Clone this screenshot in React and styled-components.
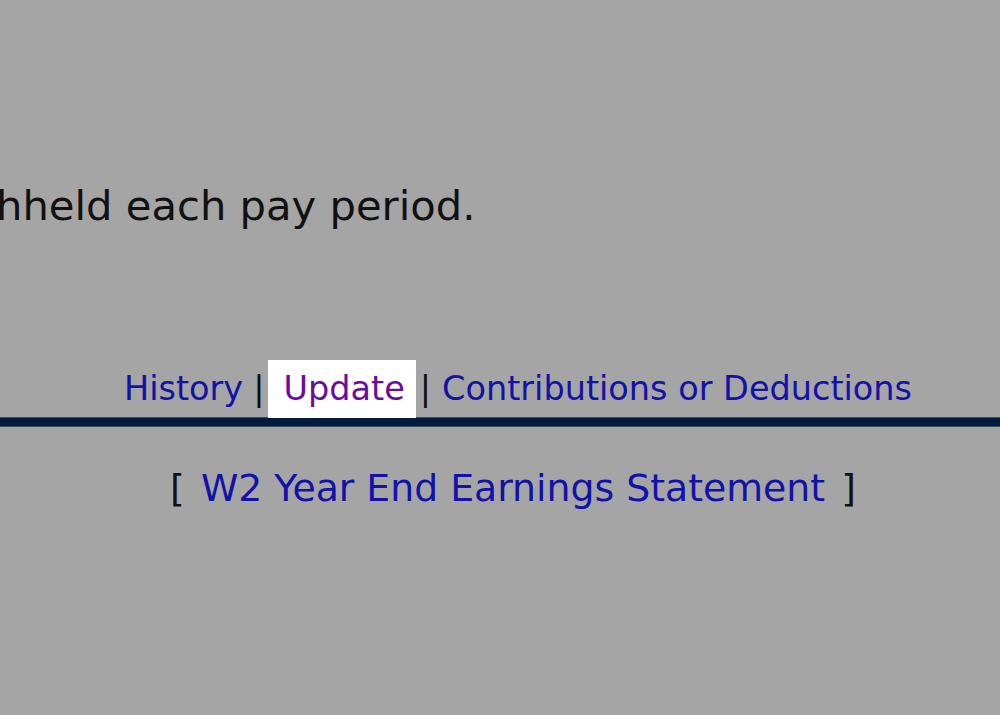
import React from "react"
import styled, { createGlobalStyle } from "styled-components"

const Global = createGlobalStyle`
  html, body {
    margin: 0;
    padding: 0;
    background: #a5a5a5;
  }
  body {
    font-family: "DejaVu Sans", Verdana, sans-serif;
    color: #111;
    overflow: hidden;
  }
`

const Page = styled.div`
  width: 1000px;
  height: 715px;
  overflow: hidden;
  padding-top: 185px;
  box-sizing: border-box;
`

const Para = styled.p`
  margin: 0 0 0 -4px;
  font-size: 41.7px;
  line-height: 42px;
  white-space: nowrap;
`

const Nav = styled.div`
  width: 1036px;
  margin-top: 133px;
  text-align: center;
  font-size: 33.5px;
  line-height: 58px;
  white-space: nowrap;
`

const NavLink = styled.a`
  color: #1212a8;
  text-decoration: none;
`

const Sep = styled.span`
  color: #111;
  margin: ${p => p.$m};
`

const Current = styled.a`
  display: inline-block;
  background: #fff;
  color: #6a0ca0;
  text-decoration: none;
  padding: 0 11px 0 15px;
`

const Rule = styled.div`
  height: 10px;
  margin-top: -1px;
  background: #021b3d;
  box-shadow: inset 0 1px 0 #3a4b66, inset 0 -1px 0 #3a4b66;
`

const Footer = styled.div`
  width: 1026px;
  margin-top: 40px;
  text-align: center;
  font-size: 37.8px;
  line-height: 43px;
  white-space: nowrap;
`

const Bracket = styled.span`
  color: #111;
  margin: ${p => p.$m};
`

export default function App() {
  return (
    <Page>
      <Global />
      <Para>hheld each pay period.</Para>
      <Nav>
        <NavLink href="#">History</NavLink>
        <Sep $m="0 4px 0 10px">|</Sep>
        <Current href="#">Update</Current>
        <Sep $m="0 11px 0 4px">|</Sep>
        <NavLink href="#">Contributions or Deductions</NavLink>
      </Nav>
      <Rule />
      <Footer>
        <Bracket $m="0 4px 0 0">[ </Bracket>
        <NavLink href="#">W2 Year End Earnings Statement</NavLink>
        <Bracket $m="0 0 0 4px"> ]</Bracket>
      </Footer>
    </Page>
  )
}
